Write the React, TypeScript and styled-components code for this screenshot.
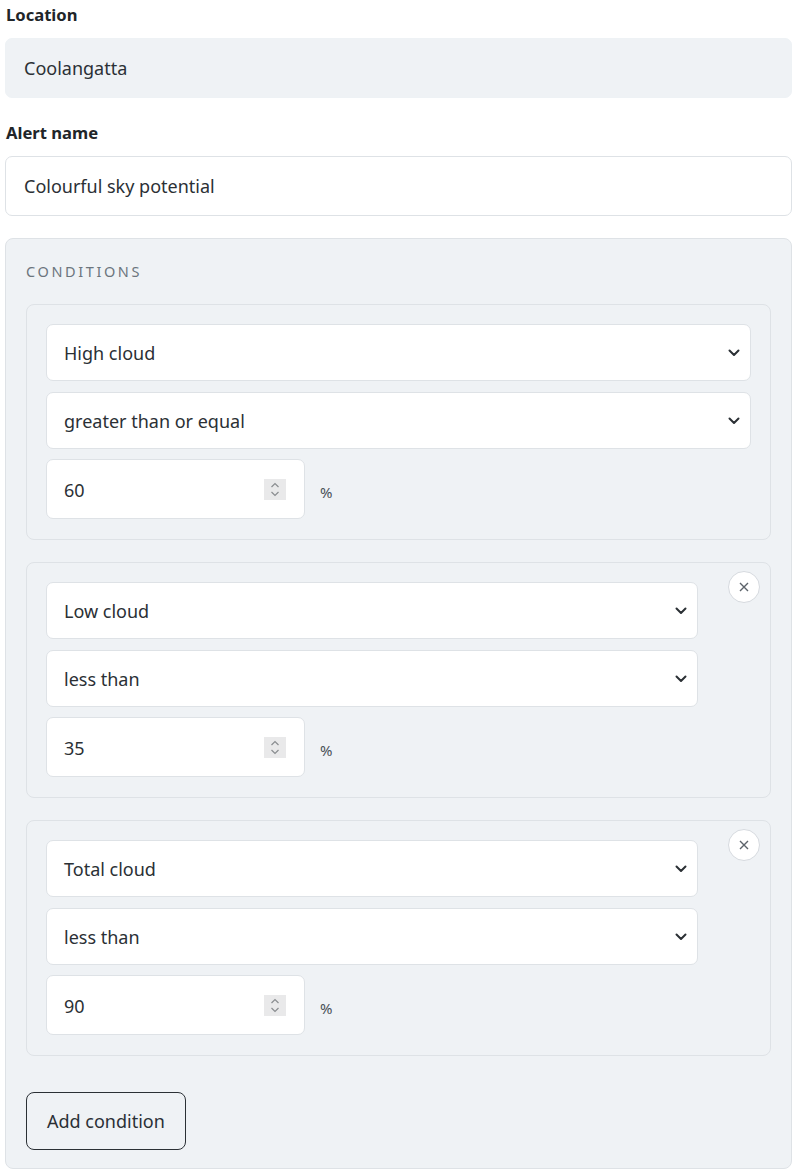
import React from "react";
import styled, { createGlobalStyle } from "styled-components";

const Global = createGlobalStyle`
  * { box-sizing: border-box; }
  body {
    margin: 0;
    background: #ffffff;
    font-family: "Noto Sans", "Open Sans", Arial, sans-serif;
    color: #212529;
  }
`;

const Page = styled.div`
  width: 795px;
  padding: 4px 3px 3px 5px;
  display: flex;
  flex-direction: column;
`;

const Label = styled.div`
  font-size: 16.6px;
  font-weight: 700;
  line-height: 22px;
  padding-left: 1px;
  margin-bottom: 12px;
`;

const TextBox = styled.div<{ $readonly?: boolean }>`
  height: 60px;
  display: flex;
  align-items: center;
  padding: 0 18px;
  font-size: 18px;
  color: #2b3035;
  border-radius: 7px;
  border: 1px solid ${(p) => (p.$readonly ? "#eef2f5" : "#dee2e6")};
  background: ${(p) => (p.$readonly ? "#eff2f5" : "#ffffff")};
  margin-bottom: 24px;
`;

const Panel = styled.section`
  margin-top: -2px;
  background: #eff2f5;
  border: 1px solid #dee2e6;
  border-radius: 8px;
  padding: 20px 20px 18px 20px;
  display: flex;
  flex-direction: column;
`;

const PanelTitle = styled.div`
  font-size: 14.5px;
  letter-spacing: 2.6px;
  color: #6c757d;
  line-height: 24px;
  margin-bottom: 21px;
`;

const CardList = styled.div`
  display: flex;
  flex-direction: column;
  gap: 22px;
`;

const Card = styled.div`
  border: 1px solid #dee2e6;
  border-radius: 8px;
  padding: 19px 19px 20px 19px;
  display: flex;
  align-items: flex-start;
`;

const Fields = styled.div`
  flex: 1;
  display: flex;
  flex-direction: column;
`;

const SelectBox = styled.div`
  height: 57px;
  background: #ffffff;
  border: 1px solid #dee2e6;
  border-radius: 7px;
  display: flex;
  align-items: center;
  justify-content: space-between;
  padding: 1px 10px 0 17px;
  font-size: 18px;
  color: #2b3035;
  margin-bottom: 11px;
  & + & {
    margin-bottom: 10px;
  }
`;

const ValueRow = styled.div`
  display: flex;
  align-items: center;
  gap: 15px;
`;

const NumberBox = styled.div`
  width: 259px;
  height: 60px;
  background: #ffffff;
  border: 1px solid #dee2e6;
  border-radius: 7px;
  display: flex;
  align-items: center;
  justify-content: space-between;
  padding: 2px 18px 0 17px;
  font-size: 18px;
  color: #2b3035;
`;

const Spinner = styled.span`
  width: 22px;
  height: 21px;
  margin-top: -2px;
  background: #e9e9ea;
  display: flex;
  align-items: center;
  justify-content: center;
`;

const Unit = styled.span`
  font-size: 15px;
  color: #495057;
  padding-top: 5px;
`;

const RemoveButton = styled.button`
  width: 32px;
  height: 32px;
  flex: none;
  border-radius: 50%;
  border: 1px solid #d6dadf;
  background: #ffffff;
  margin: -11px -9px 0 30px;
  padding: 0;
  display: flex;
  align-items: center;
  justify-content: center;
  cursor: pointer;
`;

const AddButton = styled.button`
  align-self: flex-start;
  margin-top: 36px;
  height: 58px;
  padding: 0 20px;
  border: 1px solid #2b3035;
  border-radius: 8px;
  background: transparent;
  font-family: inherit;
  font-size: 18px;
  color: #2b3035;
  cursor: pointer;
`;

const Chevron = () => (
  <svg width="12" height="8" viewBox="0 0 12 8" fill="none">
    <path d="M1.5 1.5 L6 6 L10.5 1.5" stroke="#2b3035" strokeWidth="2" strokeLinecap="round" strokeLinejoin="round" />
  </svg>
);

const SpinIcon = () => (
  <svg width="10" height="15" viewBox="0 0 10 15" fill="none">
    <path d="M1.5 5 L5 1.5 L8.5 5" stroke="#8a8d90" strokeWidth="1.2" />
    <path d="M1.5 10 L5 13.5 L8.5 10" stroke="#8a8d90" strokeWidth="1.2" />
  </svg>
);

const CloseIcon = () => (
  <svg width="10" height="10" viewBox="0 0 10 10">
    <path d="M1 1 L9 9 M9 1 L1 9" stroke="#5c636a" strokeWidth="1.4" />
  </svg>
);

type Condition = { field: string; op: string; value: number; removable: boolean };

const conditions: Condition[] = [
  { field: "High cloud", op: "greater than or equal", value: 60, removable: false },
  { field: "Low cloud", op: "less than", value: 35, removable: true },
  { field: "Total cloud", op: "less than", value: 90, removable: true },
];

export default function App() {
  return (
    <Page>
      <Global />
      <Label>Location</Label>
      <TextBox $readonly>Coolangatta</TextBox>
      <Label>Alert name</Label>
      <TextBox>Colourful sky potential</TextBox>
      <Panel>
        <PanelTitle>CONDITIONS</PanelTitle>
        <CardList>
          {conditions.map((c, i) => (
            <Card key={i}>
              <Fields>
                <SelectBox>
                  <span>{c.field}</span>
                  <Chevron />
                </SelectBox>
                <SelectBox>
                  <span>{c.op}</span>
                  <Chevron />
                </SelectBox>
                <ValueRow>
                  <NumberBox>
                    <span>{c.value}</span>
                    <Spinner>
                      <SpinIcon />
                    </Spinner>
                  </NumberBox>
                  <Unit>%</Unit>
                </ValueRow>
              </Fields>
              {c.removable && (
                <RemoveButton aria-label="Remove condition">
                  <CloseIcon />
                </RemoveButton>
              )}
            </Card>
          ))}
        </CardList>
        <AddButton>Add condition</AddButton>
      </Panel>
    </Page>
  );
}
